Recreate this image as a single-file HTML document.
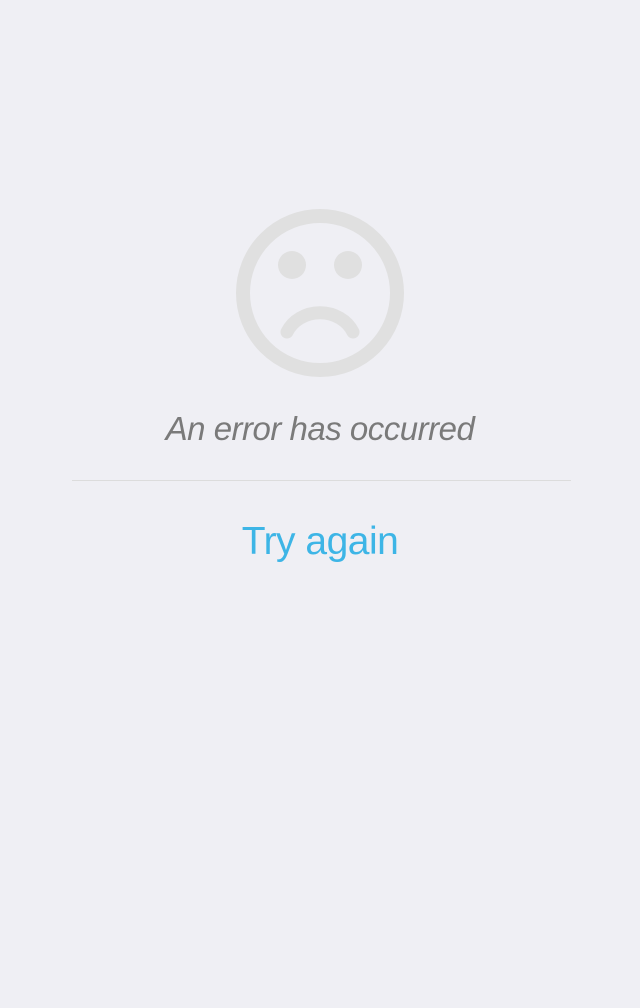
<!DOCTYPE html>
<html><head><meta charset="utf-8"><style>
html,body{margin:0;padding:0;width:640px;height:1008px;background:#efeff4;overflow:hidden;font-family:"Liberation Sans",sans-serif}
.t1{position:absolute;left:0;width:640px;top:410px;text-align:center;font-style:italic;font-size:33px;color:#7a7a7a;letter-spacing:-0.5px}
.hr{position:absolute;left:72px;width:499px;top:480px;height:1px;background:#dcdcdc}
.t2{position:absolute;left:0;width:640px;top:520px;text-align:center;font-size:39px;color:#3db5e6;letter-spacing:-0.5px}
</style></head><body>
<svg style="position:absolute;left:0;top:0" width="640" height="500">
<circle cx="320" cy="293" r="77" fill="none" stroke="#e0e0e0" stroke-width="14"/>
<circle cx="292" cy="265" r="14" fill="#e0e0e0"/>
<circle cx="348" cy="265" r="14" fill="#e0e0e0"/>
<path d="M287 332 A36 32 0 0 1 353 332" fill="none" stroke="#e0e0e0" stroke-width="13" stroke-linecap="round"/>
</svg>
<div class="t1">An error has occurred</div>
<div class="hr"></div>
<div class="t2">Try again</div>
</body></html>
